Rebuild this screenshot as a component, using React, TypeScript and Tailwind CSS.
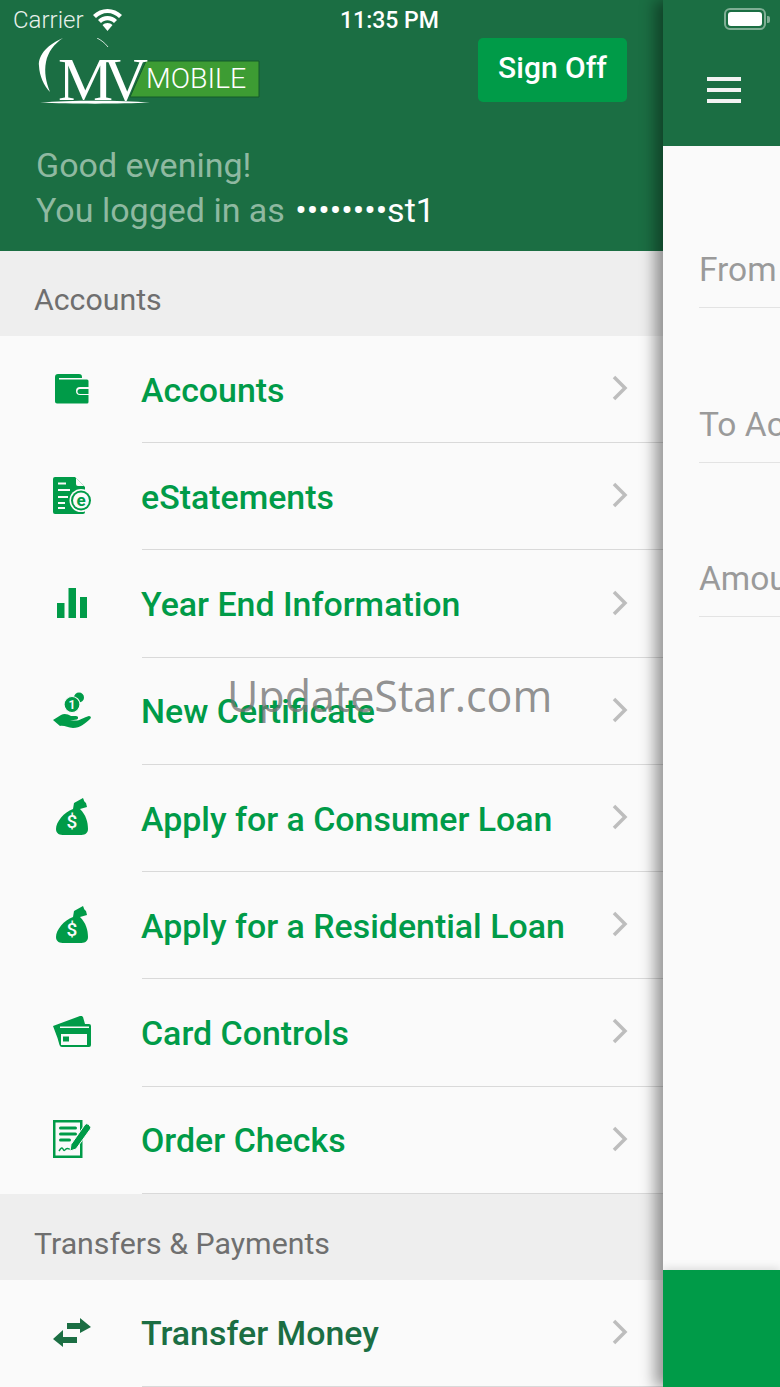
import type { ReactNode } from 'react';

const GREEN = '#009b48';
const DARK = '#1b6e43';
const BG = '#fafafa';

function WalletIcon() {
  return (
    <svg width="34" height="30" viewBox="0 0 34 30" fill={GREEN}>
      <path d="M0 3a3 3 0 0 1 3-3h21a3 3 0 0 1 3 3v1H4v1.500h28a1.500 1.500 0 0 1 1.500 1.500v6H25a4 4 0 0 0 0 8h8.500v7a1.500 1.500 0 0 1-1.500 1.500H2a2 2 0 0 1-2-2z" />
      <path d="M25 15h8.500v5H25a2.500 2.500 0 0 1 0-5z" />
    </svg>
  );
}

function StatementIcon() {
  return (
    <svg width="38" height="37" viewBox="0 0 38 37">
      <path d="M0 2a2 2 0 0 1 2-2h20l10 10v25a2 2 0 0 1-2 2H2a2 2 0 0 1-2-2z" fill={GREEN} />
      <path d="M23 1l8 8h-6a2 2 0 0 1-2-2z" fill={BG} />
      <path d="M5 6.500h8M5 13h12M5 20h10M5 26h7M5 31h7" stroke={BG} strokeWidth="2" />
      <circle cx="28" cy="23.500" r="11.500" fill={BG} />
      <circle cx="28" cy="23.500" r="10" fill={GREEN} />
      <circle cx="28" cy="23.500" r="8" fill={BG} />
      <text x="28" y="29" textAnchor="middle" fontFamily="Roboto, sans-serif" fontWeight="700" fontSize="17" fill={GREEN}>e</text>
    </svg>
  );
}

function BarsIcon() {
  return (
    <svg width="30" height="30" viewBox="0 0 30 30" fill={GREEN}>
      <rect x="0" y="15" width="7.500" height="15" />
      <rect x="11.500" y="0" width="7.500" height="30" />
      <rect x="23" y="9" width="7" height="21" />
    </svg>
  );
}

function CertificateIcon() {
  return (
    <svg width="38" height="36" viewBox="0 0 38 36" fill={GREEN}>
      <circle cx="26" cy="5.500" r="5" />
      <circle cx="19" cy="12.500" r="8" stroke={BG} strokeWidth="1.200" />
      <text x="19" y="17" textAnchor="middle" fontFamily="Roboto, sans-serif" fontWeight="700" fontSize="12" fill={BG}>1</text>
      <path d="M0 28L8 23C11 21 15 22 18 24L23 24C25 24 26 26 24 27.500L17 28.500L24 28.500C28 28 34 24 36 24C38 24 38.500 26 37 27C33 31 27 36 20 36C15 36 11 33 7 34Z" />
    </svg>
  );
}

function MoneyBagIcon() {
  return (
    <svg width="32" height="38" viewBox="0 0 32 38">
      <path d="M17 11C8 14 0 24 0 31C0 36 4 37 8 37H24C28 37 32 36 32 31C32 24 30 17 24 11L31 9L30 5C28 4 28 2 27 0L18 5Z" fill={GREEN} />
      <text x="16" y="30" textAnchor="middle" fontFamily="Roboto, sans-serif" fontWeight="500" fontSize="19" fill={BG}>$</text>
    </svg>
  );
}

function CardIcon() {
  return (
    <svg width="38" height="31" viewBox="0 0 38 31" fill={GREEN}>
      <path d="M0 10L27 0Q29-.500 30 1L32 8H36Q38 8 38 10V29Q38 31 36 31H9Q7 31 6.500 29L4.500 22Z" />
      <rect x="7" y="10.500" width="29" height="1.500" fill={BG} />
      <rect x="8" y="18" width="26" height="11" fill={BG} />
      <rect x="10" y="20.500" width="6" height="5" />
    </svg>
  );
}

function ChecksIcon() {
  return (
    <svg width="38" height="38" viewBox="0 0 38 38">
      <path d="M1.250 1.250h27v35.500h-27z" fill={BG} stroke={GREEN} strokeWidth="2.500" />
      <path d="M7.500 8h15M7.500 14h15M7.500 20h9" stroke={GREEN} strokeWidth="3" strokeLinecap="round" />
      <path d="M6 31c2-3 3-4 4-2s1 2 3 0 3 1 6 .5" fill="none" stroke={GREEN} strokeWidth="1.500" />
      <path d="M32 4.500a2.500 2.500 0 0 1 3.500 0l1.500 1.500a2.500 2.500 0 0 1 0 3.500L23 29l-6 2 1-6.500z" fill={GREEN} stroke={BG} strokeWidth="1" />
    </svg>
  );
}

function TransferIcon() {
  return (
    <svg width="38" height="29" viewBox="0 0 38 29" fill={DARK}>
      <path d="M14 5h13V0l11 9-11 6v-4H14z" />
      <path d="M24 19H10v-7L0 21l10 8v-4h14z" />
    </svg>
  );
}

function Chevron() {
  return (
    <svg width="16" height="26" viewBox="0 0 16 26" fill="none" stroke="#bdbdbd" strokeWidth="3.500">
      <path d="M2 2l11 11L2 24" />
    </svg>
  );
}

function SectionHeader({ title, className }: { title: string; className: string }) {
  return (
    <div className={`bg-[#eeeeee] flex items-center pl-[34px] pt-[13px] text-[#6f6f6f] text-[30.300px] ${className}`}>
      {title}
    </div>
  );
}

function MenuRow({ icon, label, dark }: { icon: ReactNode; label: string; dark?: boolean }) {
  return (
    <div className="h-[107.300px] flex">
      <div className="w-[142px] shrink-0 flex items-center pl-[53px] -translate-y-[1px]">
        <div className="w-[38px] flex justify-center">{icon}</div>
      </div>
      <div className="flex-1 flex items-center justify-between border-b border-[#d9d9d9] pr-[35px]">
        <span className={`text-[33.900px] font-medium -ml-[1px] translate-y-[2px] ${dark ? 'text-[#1b6e43]' : 'text-[#009b48]'}`}>{label}</span>
        <span className="flex -translate-y-[1px]"><Chevron /></span>
      </div>
    </div>
  );
}

const accountRows = [
  { label: 'Accounts', icon: <WalletIcon /> },
  { label: 'eStatements', icon: <StatementIcon /> },
  { label: 'Year End Information', icon: <BarsIcon /> },
  { label: 'New Certificate', icon: <CertificateIcon /> },
  { label: 'Apply for a Consumer Loan', icon: <MoneyBagIcon /> },
  { label: 'Apply for a Residential Loan', icon: <MoneyBagIcon /> },
  { label: 'Card Controls', icon: <CardIcon /> },
  { label: 'Order Checks', icon: <ChecksIcon /> },
];

function Logo() {
  return (
    <div className="relative w-[224px] h-[66px] ml-[1px]">
      <svg className="absolute left-0 top-0" width="224" height="66" viewBox="0 0 224 66">
        <path d="M26 0C12 6 1 16 2 28c.5 10 5 20 11 26C9 44 7 34 9 24 11 14 17 6 26 0z" fill="#ffffff" />
        <path d="M60 0c4 2 8 5 11 9" fill="none" stroke="#ffffff" strokeWidth="0.800" />
        <path d="M109 23H222V59H93z" fill="#3d9c33" stroke="#145a2b" strokeWidth="1" />
        <path d="M3 64.500c30-2.500 80-2.500 110 0-30 1.500-80 1.500-110 0z" fill="#ffffff" />
      </svg>
      <span className="absolute left-[21px] top-[10px] font-['Liberation_Serif',serif] text-[62px] leading-[62px] tracking-[-10px] text-white">MV</span>
      <span className="absolute left-[109px] top-[24px] text-[28.500px] leading-[34px] text-white font-light">MOBILE</span>
    </div>
  );
}

function StatusBar() {
  return (
    <div className="absolute inset-x-0 top-0 h-[40px] flex items-center justify-between pl-[13px] pr-[10px] text-white text-[24px]">
      <div className="flex items-center gap-[9px]">
        <span className="opacity-90 font-light">Carrier</span>
        <svg width="29" height="22" viewBox="0 0 29 22" fill="#ffffff">
          <path d="M14.500 0C9 0 4 2 0 6l3 3c3-3 7-5 11.500-5S23 6 26 9l3-3c-4-4-9-6-14.500-6z" />
          <path d="M14.500 7c-3.500 0-7 1.500-9.500 4l3 3c2-1.800 4-2.800 6.500-2.800S19 12.200 21 14l3-3c-2.500-2.500-6-4-9.500-4z" />
          <path d="M14.500 14c-2 0-3.700.8-5 2l5 6 5-6c-1.300-1.200-3-2-5-2z" />
        </svg>
      </div>
      <span className="absolute left-[340px] top-[4px] font-medium text-[23px] leading-[33px]">11:35 PM</span>
      <div className="flex items-center -translate-y-[1px]">
        <div className="w-[42px] h-[22px] rounded-[6px] border-2 border-[#7fae94] p-[2px]">
          <div className="w-full h-full rounded-[3px] bg-white" />
        </div>
        <div className="w-[3px] h-[7px] ml-[1px] rounded-r-[2px] bg-[#7fae94]" />
      </div>
    </div>
  );
}

export default function App() {
  return (
    <div className="relative w-[780px] h-[1387px] overflow-hidden flex bg-[#fafafa] font-['Roboto',sans-serif]">
      <aside className="w-[663px] h-full shrink-0 flex flex-col overflow-hidden">
        <header className="h-[251px] shrink-0 bg-[#1b6e43] pl-[36px] pr-[36px] pt-[38px]">
          <div className="flex justify-between items-start">
            <Logo />
            <button className="w-[149px] h-[64px] pb-[6px] rounded-[5px] bg-[#009b48] text-white text-[30px] font-medium">Sign Off</button>
          </div>
          <div className="mt-[39px] text-[34px] leading-[45px] text-[#8fb9a1]">
            <div>Good evening!</div>
            <div>You logged in as <span className="text-white ml-[2px]">••••••••st1</span></div>
          </div>
        </header>
        <SectionHeader title="Accounts" className="h-[85px] shrink-0" />
        {accountRows.map((row) => (
          <MenuRow key={row.label} icon={row.icon} label={row.label} />
        ))}
        <SectionHeader title="Transfers & Payments" className="h-[86px] shrink-0" />
        <MenuRow icon={<TransferIcon />} label="Transfer Money" dark />
      </aside>

      <main className="relative flex-1 flex flex-col overflow-hidden shadow-[-8px_0_14px_rgba(0,0,0,0.4)]">
        <div className="h-[146px] shrink-0 bg-[#1b6e43] flex items-end pl-[44px] pb-[43px]">
          <div className="flex flex-col gap-[7px] w-[34px]">
            <div className="h-[4px] bg-[#f3f3f3]" />
            <div className="h-[4px] bg-[#f3f3f3]" />
            <div className="h-[4px] bg-[#f3f3f3]" />
          </div>
        </div>
        <div className="flex-1 pl-[36px] pt-[102px]">
          {['From', 'To Ac', 'Amou'].map((label) => (
            <div key={label} className="h-[154.500px]">
              <div className="h-[60px] border-b border-[#e3e3e3] text-[33.500px] leading-[44px] text-[#9a9a9a] whitespace-nowrap overflow-hidden">{label}</div>
            </div>
          ))}
        </div>
        <div className="h-[117px] shrink-0 bg-[#009b48] shadow-[0_-2px_8px_rgba(0,0,0,0.12)]" />
      </main>

      <StatusBar />
      <div className="absolute left-[227px] top-[669px] text-[43px] leading-[54px] font-['Open_Sans',sans-serif] text-[#757575]/80 pointer-events-none">UpdateStar.com</div>
    </div>
  );
}
